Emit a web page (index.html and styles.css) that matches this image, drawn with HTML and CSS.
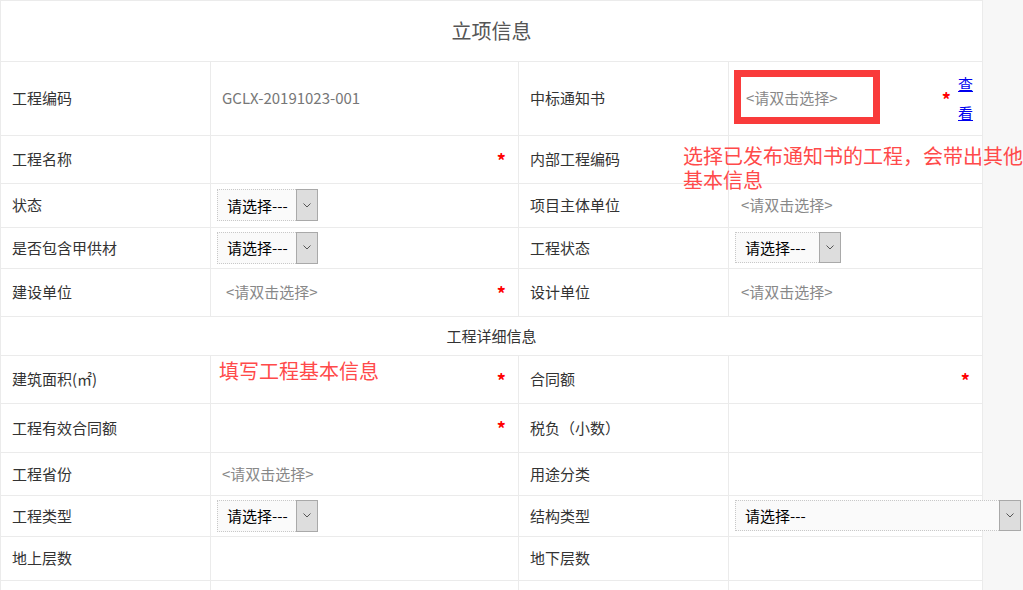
FILE: index.html
```html
<!DOCTYPE html>
<html lang="zh-CN">
<head>
<meta charset="utf-8">
<title>立项信息</title>
<link rel="stylesheet" href="styles.css">
</head>
<body>
<div class="page">
  <table class="form">
    <colgroup><col class="c1"><col class="c2"><col class="c3"><col class="c4"></colgroup>
    <tr class="h61"><td colspan="4" class="title">立项信息</td></tr>
    <tr class="h74">
      <td class="lbl">工程编码</td>
      <td class="val"><span class="code">GCLX-20191023-001</span></td>
      <td class="lbl">中标通知书</td>
      <td class="val"><div class="field f-link"><span class="ph ph-wide">&lt;请双击选择&gt;</span><span class="tail"><span class="star">*</span><a class="view" href="#">查看</a></span></div></td>
    </tr>
    <tr class="h48">
      <td class="lbl">工程名称</td>
      <td class="val"><div class="field"><span></span><span class="star">*</span></div></td>
      <td class="lbl">内部工程编码</td>
      <td class="val"></td>
    </tr>
    <tr class="h44">
      <td class="lbl">状态</td>
      <td class="val"><div class="sel"><span class="sel-body">请选择---</span><span class="sel-btn"><svg width="8" height="5" viewBox="0 0 8 5"><path d="M0.5 0.5 L4 4 L7.5 0.5" fill="none" stroke="#555" stroke-width="1"/></svg></span></div></td>
      <td class="lbl">项目主体单位</td>
      <td class="val"><span class="ph ph-r">&lt;请双击选择&gt;</span></td>
    </tr>
    <tr class="h41">
      <td class="lbl">是否包含甲供材</td>
      <td class="val"><div class="sel"><span class="sel-body">请选择---</span><span class="sel-btn"><svg width="8" height="5" viewBox="0 0 8 5"><path d="M0.5 0.5 L4 4 L7.5 0.5" fill="none" stroke="#555" stroke-width="1"/></svg></span></div></td>
      <td class="lbl">工程状态</td>
      <td class="val"><div class="sel sel-r sel-106"><span class="sel-body">请选择---</span><span class="sel-btn"><svg width="8" height="5" viewBox="0 0 8 5"><path d="M0.5 0.5 L4 4 L7.5 0.5" fill="none" stroke="#555" stroke-width="1"/></svg></span></div></td>
    </tr>
    <tr class="h48">
      <td class="lbl">建设单位</td>
      <td class="val"><div class="field"><span class="ph ph-l">&lt;请双击选择&gt;</span><span class="star">*</span></div></td>
      <td class="lbl">设计单位</td>
      <td class="val"><span class="ph ph-r">&lt;请双击选择&gt;</span></td>
    </tr>
    <tr class="h39"><td colspan="4" class="section">工程详细信息</td></tr>
    <tr class="h48">
      <td class="lbl">建筑面积(㎡)</td>
      <td class="val"><div class="field"><span></span><span class="star">*</span></div></td>
      <td class="lbl">合同额</td>
      <td class="val"><div class="field"><span></span><span class="star">*</span></div></td>
    </tr>
    <tr class="h49">
      <td class="lbl">工程有效合同额</td>
      <td class="val"><div class="field"><span></span><span class="star">*</span></div></td>
      <td class="lbl">税负（小数）</td>
      <td class="val"></td>
    </tr>
    <tr class="h43">
      <td class="lbl">工程省份</td>
      <td class="val"><span class="ph ph-p">&lt;请双击选择&gt;</span></td>
      <td class="lbl">用途分类</td>
      <td class="val"></td>
    </tr>
    <tr class="h41">
      <td class="lbl">工程类型</td>
      <td class="val"><div class="sel"><span class="sel-body">请选择---</span><span class="sel-btn"><svg width="8" height="5" viewBox="0 0 8 5"><path d="M0.5 0.5 L4 4 L7.5 0.5" fill="none" stroke="#555" stroke-width="1"/></svg></span></div></td>
      <td class="lbl">结构类型</td>
      <td class="val"><div class="sel sel-r sel-wide"><span class="sel-body">请选择---</span><span class="sel-btn"><svg width="8" height="5" viewBox="0 0 8 5"><path d="M0.5 0.5 L4 4 L7.5 0.5" fill="none" stroke="#555" stroke-width="1"/></svg></span></div></td>
    </tr>
    <tr class="h44">
      <td class="lbl">地上层数</td>
      <td class="val"></td>
      <td class="lbl">地下层数</td>
      <td class="val"></td>
    </tr>
    <tr class="h44">
      <td class="lbl"></td>
      <td class="val"></td>
      <td class="lbl"></td>
      <td class="val"></td>
    </tr>
  </table>

  <div class="mark-box"></div>
  <div class="note note-1">选择已发布通知书的工程，会带出其他<br>基本信息</div>
  <div class="note note-2">填写工程基本信息</div>
</div>
</body>
</html>
```
FILE: styles.css
```css
html, body {
  margin: 0;
  padding: 0;
}
body {
  background: #f7f7f7;
  font-family: "Noto Sans CJK SC", "Microsoft YaHei", sans-serif;
  font-size: 15px;
  color: #333;
  overflow: hidden;
}
.page {
  position: relative;
  width: 982px;
  background: #fff;
}
.form {
  width: 982px;
  border-collapse: collapse;
  table-layout: fixed;
}
.form td {
  border: 1px solid #ebebeb;
  padding: 0 0 2px 0;
  vertical-align: middle;
  white-space: nowrap;
}
.c1 { width: 210px; }
.c2 { width: 308px; }
.c3 { width: 210px; }
.c4 { width: 254px; }

.h61 { height: 61px; }
.h74 { height: 74px; }
.h48 { height: 48px; }
.h44 { height: 44px; }
.h41 { height: 41px; }
.h39 { height: 39px; }
.h49 { height: 49px; }
.h43 { height: 43px; }

.title {
  text-align: center;
  font-size: 20px;
  color: #555;
}
.section {
  text-align: center;
  font-size: 15px;
  color: #333;
}
.lbl {
  padding-left: 11px !important;
  color: #333;
}
.val {
  overflow: visible;
}
.code {
  padding-left: 11px;
  color: #777;
}
.ph {
  color: #888;
}
.ph-l { padding-left: 4px; }
.ph-p { padding-left: 11px; }
.ph-r { padding-left: 12px; }
.ph-wide { padding-left: 17px; }

.field {
  display: flex;
  align-items: center;
  justify-content: space-between;
  padding: 0 12px;
}
.field .ph-l { padding-left: 3px; }
.f-link { padding-right: 9px; padding-left: 0; }
.tail {
  display: flex;
  align-items: center;
  gap: 7px;
}
.star {
  color: #f00;
  font-weight: bold;
  font-size: 18px;
  line-height: 1;
  position: relative;
  top: 1px;
}
.view {
  display: block;
  width: 15px;
  white-space: normal;
  line-height: 29px;
  color: #0000ee;
  text-decoration: underline;
  font-size: 15px;
}

.sel {
  display: flex;
  width: 101px;
  height: 32px;
  margin-left: 6px;
  margin-top: 1px;
  box-sizing: border-box;
}
.sel-r { margin-left: 6px; }
.sel-106 { width: 106px; height: 31px; }
.sel-wide { width: 286px; height: 31px; }
.sel-body {
  flex: 1;
  display: flex;
  align-items: center;
  padding-left: 9px;
  border: 1px dotted #c8c8c8;
  border-right: none;
  background: #fafafa;
  color: #000;
  font-size: 15px;
}
.sel-btn {
  width: 20px;
  display: flex;
  align-items: center;
  justify-content: center;
  background: #dddddd;
  border: 1px solid #a9a9a9;
}

.mark-box {
  position: absolute;
  left: 734px;
  top: 70px;
  width: 146px;
  height: 54px;
  box-sizing: border-box;
  border: 7px solid #f93b3b;
}
.note {
  position: absolute;
  color: #ff4a4a;
  font-size: 20px;
  line-height: 24px;
  white-space: nowrap;
}
.note-1 { left: 683px; top: 144px; }
.note-2 { left: 219px; top: 359px; }
```
